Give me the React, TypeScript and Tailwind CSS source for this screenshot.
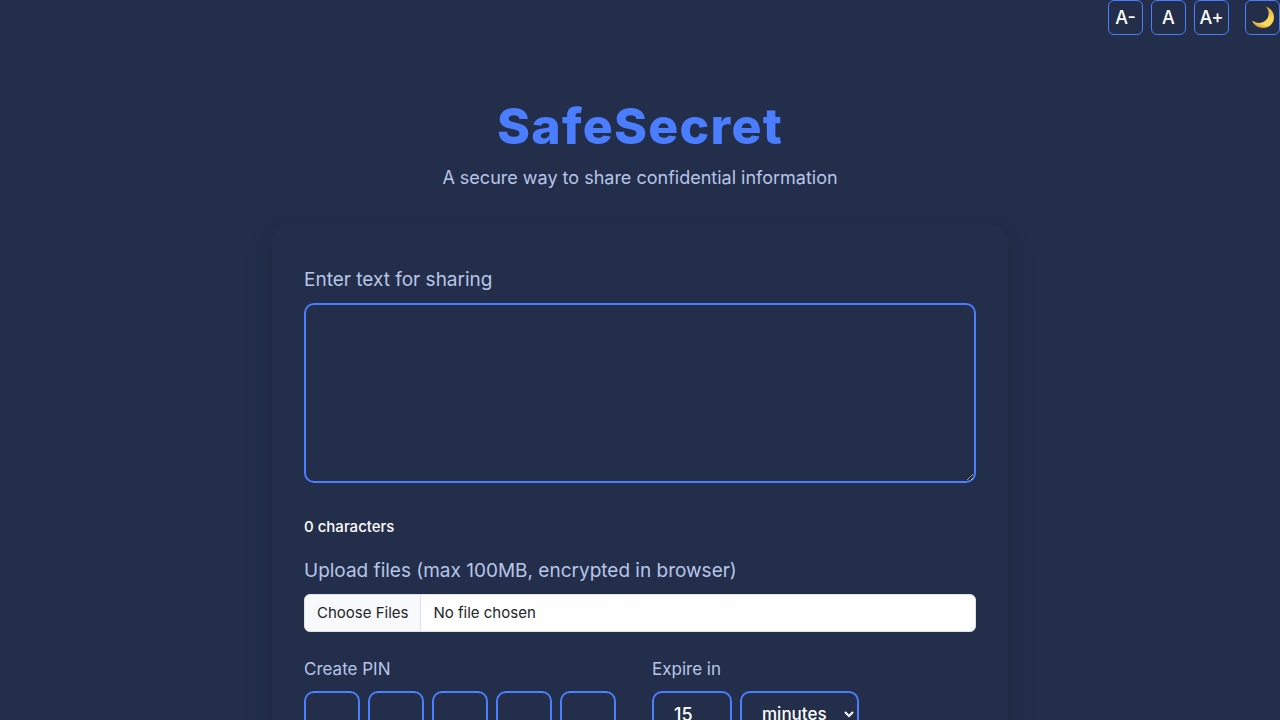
import { useState } from "react";

const pinSlots = [1, 2, 3, 4, 5];

const field =
  "rounded-[10px] border-2 border-[#4a7dff] bg-[#232e4a] text-white outline-none focus:ring-2 focus:ring-[#4a7dff]/40";
const toolButton =
  "flex size-[35px] items-center justify-center rounded-md border border-[#4a7dff] bg-[#232e4a] text-lg font-medium text-white";

function Moon() {
  return (
    <svg viewBox="0 0 24 24" className="size-6 shrink-0" aria-hidden="true">
      <defs>
        <linearGradient id="moon" x1="0.8" y1="0.1" x2="0.45" y2="1">
          <stop offset="0" stopColor="#e2b13c" />
          <stop offset="0.4" stopColor="#f7d458" />
          <stop offset="0.8" stopColor="#fbdc5c" />
          <stop offset="1" stopColor="#d99e35" />
        </linearGradient>
      </defs>
      <path
        d="M16 0.9C20.4 2.8 23.2 6.7 23 11.4C22.8 17.5 18 22 12 22C7.4 22 3.4 19.7 1.5 15.6C1.3 15 1.8 14.8 2.3 15.1C4.1 16.5 6.4 17.2 8.9 16.9C13.9 16.4 17.5 12.5 17.7 7.7C17.8 5.5 17.1 3.6 15.7 1.6C15.4 1.1 15.6 0.7 16 0.9Z"
        fill="url(#moon)"
      />
    </svg>
  );
}

export default function App() {
  const [text, setText] = useState("");
  const [amount, setAmount] = useState("15");

  return (
    <div className="min-h-screen bg-[#232e4a] font-['Inter','Liberation_Sans',sans-serif] text-white">
      <header className="flex justify-end gap-4">
        <div className="flex gap-2">
          <button type="button" className={toolButton}>A-</button>
          <button type="button" className={toolButton}>A</button>
          <button type="button" className={toolButton}>A+</button>
        </div>
        <button type="button" aria-label="Toggle dark mode" className={toolButton}>
          <Moon />
        </button>
      </header>

      <main className="mx-auto max-w-[736px] pt-[60px] pb-12">
        <div className="text-center">
          <h1 className="text-[50px] leading-[62px] font-extrabold tracking-wide text-[#4a7dff]">SafeSecret</h1>
          <p className="mt-[7px] text-lg leading-7 text-[#b8c5e8]">A secure way to share confidential information</p>
        </div>

        <form className="mt-8 rounded-[18px] bg-[#232e4a] px-8 pt-10 pb-8 shadow-[0_8px_24px_rgba(20,28,45,0.3)]">
          <label htmlFor="secret" className="block text-[19px] leading-8 text-[#b8c5e8]">
            Enter text for sharing
          </label>
          <textarea
            id="secret"
            value={text}
            onChange={(e) => setText(e.target.value)}
            className={`${field} mt-[7px] block h-[180px] w-full resize p-4 text-lg`}
          />
          <p className="mt-8 text-[15px] leading-6 font-medium">{text.length} characters</p>

          <label htmlFor="files" className="mt-4 block text-[19px] leading-8 text-[#b8c5e8]">
            Upload files (max 100MB, encrypted in browser)
          </label>
          <input
            id="files"
            type="file"
            multiple
            className="mt-[7px] block h-[38px] w-full rounded-md border border-[#dee2e6] bg-white text-[15px] leading-6 text-[#212529] file:mr-3 file:h-9 file:border-r file:border-[#dee2e6] file:bg-[#f8f9fa] file:px-3 file:text-[#212529]"
          />

          <div className="mt-[23px] grid grid-cols-2 gap-6">
            <fieldset>
              <legend className="mb-2 text-[17px] leading-7 text-[#b8c5e8]">Create PIN</legend>
              <div className="flex gap-2">
                {pinSlots.map((n) => (
                  <input
                    key={n}
                    type="password"
                    inputMode="numeric"
                    maxLength={1}
                    aria-label={`PIN digit ${n}`}
                    className={`${field} h-[46px] w-14 text-center text-lg`}
                  />
                ))}
              </div>
            </fieldset>
            <div>
              <label htmlFor="amount" className="mb-2 block text-[17px] leading-7 text-[#b8c5e8]">
                Expire in
              </label>
              <div className="flex gap-2">
                <input
                  id="amount"
                  type="text"
                  inputMode="numeric"
                  value={amount}
                  onChange={(e) => setAmount(e.target.value)}
                  className={`${field} h-[46px] w-20 px-5 text-lg font-medium`}
                />
                <select
                  aria-label="Expiry unit"
                  defaultValue="minutes"
                  className={`${field} h-[46px] w-[119px] pl-4 text-[17px] font-medium`}
                >
                  <option>minutes</option>
                  <option>hours</option>
                  <option>days</option>
                </select>
              </div>
            </div>
          </div>
        </form>
      </main>
    </div>
  );
}
